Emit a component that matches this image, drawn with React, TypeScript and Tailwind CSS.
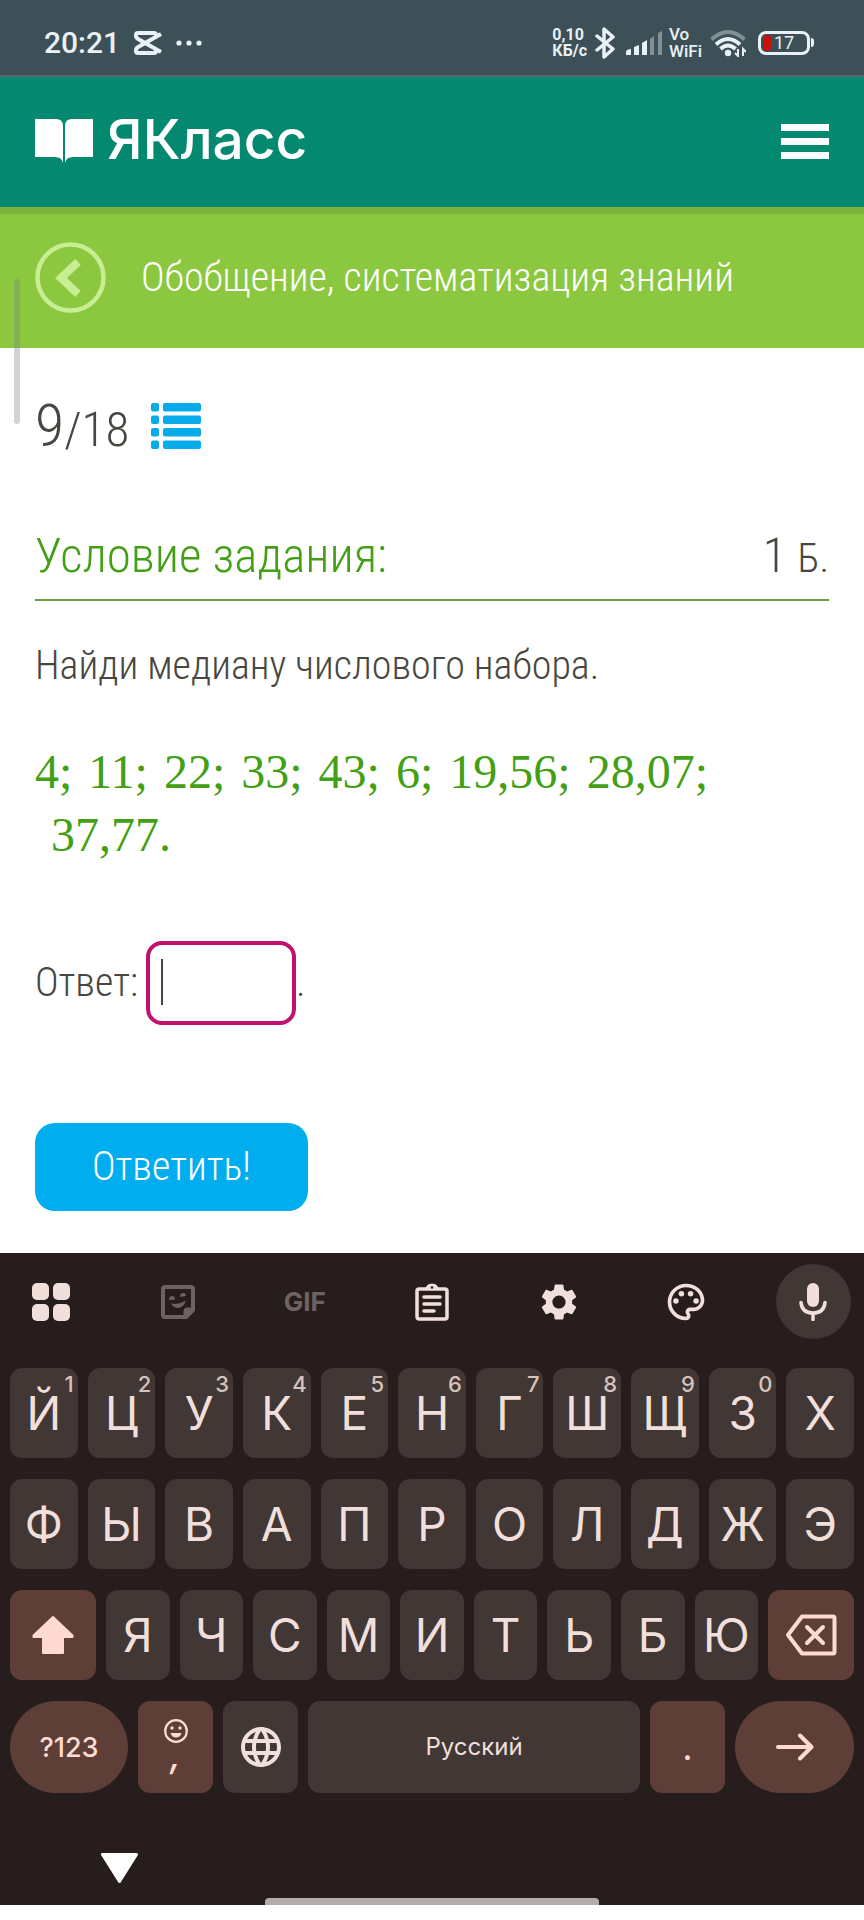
import { ReactElement, ReactNode } from 'react';
import { MdLanguage, MdOutlinePalette, MdSettings } from 'react-icons/md';

interface LetterKey {
  label: string;
  hint?: string;
}

const topRow: LetterKey[] = [
  { label: 'Й', hint: '1' },
  { label: 'Ц', hint: '2' },
  { label: 'У', hint: '3' },
  { label: 'К', hint: '4' },
  { label: 'Е', hint: '5' },
  { label: 'Н', hint: '6' },
  { label: 'Г', hint: '7' },
  { label: 'Ш', hint: '8' },
  { label: 'Щ', hint: '9' },
  { label: 'З', hint: '0' },
  { label: 'Х' },
];

const middleRow = ['Ф', 'Ы', 'В', 'А', 'П', 'Р', 'О', 'Л', 'Д', 'Ж', 'Э'];
const bottomRow = ['Я', 'Ч', 'С', 'М', 'И', 'Т', 'Ь', 'Б', 'Ю'];

const numbers = ['4;', '11;', '22;', '33;', '43;', '6;', '19,56;', '28,07;', '37,77.'];

function StatusBar() {
  return (
    <div className="flex h-[77px] items-center justify-between border-b-2 border-[#536872] bg-[#3d5057] pt-[10px] pr-[50px] pl-[44px] font-[Roboto,sans-serif] font-medium text-[#e8f1f5]">
      <div className="flex items-center">
        <span className="text-[30px] leading-9">20:21</span>
        <svg className="ml-[14px] h-6 w-7" viewBox="0 0 28 24" fill="none" stroke="currentColor" strokeWidth="4">
          <path d="M27 3 5 15.500Q2 17 2 19v1q0 2 2 2h16q2 0 2-2v-1" />
          <path d="M27 21 5 8.500Q2 7 2 5V4q0-2 2-2h16q2 0 2 2v1" />
        </svg>
        <svg className="ml-[14px] h-6 w-7" viewBox="0 0 28 24" fill="currentColor">
          <circle cx="3" cy="12" r="2.600" />
          <circle cx="13" cy="12" r="2.600" />
          <circle cx="23" cy="12" r="2.600" />
        </svg>
      </div>

      <div className="flex items-center">
        <div className="text-[16px] leading-4 font-bold">
          <div>0,10</div>
          <div>КБ/с</div>
        </div>
        <svg className="ml-2 h-8 w-5" viewBox="0 0 20 32" fill="none" stroke="currentColor" strokeWidth="3.500">
          <path d="m2 9 16 13-9 8V2l9 8L2 23" strokeLinecap="round" strokeLinejoin="round" />
        </svg>
        <svg className="ml-[11px] h-6 w-9" viewBox="0 0 36 24" fill="currentColor">
          <path d="M0 24v-3q0-2 2-2.500l3-.5v6zM8 24v-8l5-2v10zM16 24V12l5-3v15z" />
          <path d="M24 24V8l4-3v19zM32 24V2l4-2v24z" opacity=".4" />
        </svg>
        <div className="ml-[7px] text-[17px] leading-[17px]">
          <div>Vo</div>
          <div>WiFi</div>
        </div>
        <svg className="ml-2 h-7 w-9" viewBox="0 0 36 28" fill="none" stroke="currentColor" strokeWidth="4">
          <path d="M1.500 10.500Q18-4.500 34.500 10.500" opacity=".4" />
          <path d="M6 15.500Q18 4.500 30 15.500" />
          <path d="M10.500 20Q18 13 25.500 20" />
          <circle cx="18" cy="24" r="3.200" fill="currentColor" stroke="none" />
          <path d="M28 20v7l-3-3M33 27v-7l3 3" strokeWidth="2" />
        </svg>
        <div className="ml-3 flex h-6 w-[52px] items-center rounded-lg border-[3px] border-current px-[2px]">
          <span className="h-4 w-2 rounded-sm bg-[#c8100c]" />
          <span className="pl-[3px] text-[18px] leading-5 font-normal">17</span>
        </div>
        <span className="ml-px h-[9px] w-[3px] rounded-r bg-current" />
      </div>
    </div>
  );
}

function SiteHeader() {
  return (
    <header className="flex h-[130px] items-center justify-between bg-[#058870] px-[35px] pb-[2px] text-white">
      <a href="#home" className="flex items-center gap-[14px] pb-1">
        <svg className="mt-1 h-11 w-[58px]" viewBox="0 0 58 44" fill="currentColor">
          <path d="M0 0h21q7 0 7 7v37q-1-6-8-6H0z" />
          <path d="M58 0H37q-7 0-7 7v37q1-6 8-6h20z" />
        </svg>
        <span className="font-[Inter,sans-serif] text-[55px] leading-[60px] font-medium">ЯКласс</span>
      </a>
      <button type="button" aria-label="Меню" className="flex w-12 flex-col gap-[7px]">
        <span className="h-[7px] bg-white" />
        <span className="h-[7px] bg-white" />
        <span className="h-[7px] bg-white" />
      </button>
    </header>
  );
}

function TopicBar() {
  return (
    <div className="relative flex h-[141px] items-center gap-[35px] bg-[#8bc83f] px-[35px] text-white shadow-[inset_0_7px_0_#7cb33e]">
      <button type="button" aria-label="Назад" className="text-[#c8ee93]">
        <svg className="size-[71px]" viewBox="0 0 71 71" fill="none" stroke="currentColor">
          <circle cx="35.500" cy="35.500" r="33" strokeWidth="4.500" />
          <path d="M43 20 26 36l17 16" strokeWidth="8" />
        </svg>
      </button>
      <h1 className="text-[40px] leading-[48px]">Обобщение, систематизация знаний</h1>
      <span className="absolute top-[72px] left-[14px] h-[145px] w-[6px] rounded-full bg-[#808080]/35" />
    </div>
  );
}

function Task() {
  return (
    <main className="px-[35px] pt-12 pb-[42px] text-[#474740]">
      <div className="flex h-[60px] items-center gap-[22px]">
        <div className="flex items-baseline pt-1 text-[49px] leading-[60px]">
          <span className="text-[60px]">9</span>
          <span>/18</span>
        </div>
        <button type="button" aria-label="Список заданий" className="text-[#08abea]">
          <svg className="h-[46px] w-[50px]" viewBox="0 0 50 46" fill="currentColor">
            {[0, 12.5, 25, 37.5].map((y) => (
              <g key={y}>
                <rect x="0" y={y} width="8" height="8.500" rx="2" />
                <rect x="12" y={y} width="38" height="8.500" rx="2" />
              </g>
            ))}
          </svg>
        </button>
      </div>

      <div className="mt-[70px] flex h-[75px] justify-between border-b-2 border-[#6f9a4c] text-[49px] leading-[60px]">
        <h2 className="text-[#439f15]">Условие задания:</h2>
        <div>
          1 <span className="text-[40px]">Б.</span>
        </div>
      </div>

      <p className="mt-[41px] text-[40px] leading-[48px]">Найди медиану числового набора.</p>

      <p className="mt-[50px] font-['Liberation_Serif',serif] text-[48px] leading-[63px] text-[#439f15]">
        {numbers.map((value, index) => (
          <span key={value} className={index ? 'inline-block pl-4' : 'inline-block'}>
            {value}
          </span>
        ))}
      </p>

      <div className="mt-[75px] flex items-center text-[40px] leading-[48px]">
        <label htmlFor="answer" className="pr-2">
          Ответ:
        </label>
        <div className="relative">
          <input
            id="answer"
            type="text"
            className="block h-[84px] w-[150px] rounded-2xl border-4 border-[#c1106e] px-3 outline-none"
          />
          <span className="absolute top-[18px] left-[15px] h-[46px] w-[2px] bg-[#474740]" />
        </div>
        <span>.</span>
      </div>

      <button type="button" className="mt-[98px] h-[88px] rounded-[20px] bg-[#00adef] px-[57px] text-[40px] text-white">
        Ответить!
      </button>
    </main>
  );
}

type KeyProps = {
  children: ReactNode;
  className?: string;
  label?: string;
};

function Key({ children, className = 'min-w-0 flex-1 rounded-xl bg-[#413735]', label }: KeyProps) {
  return (
    <button type="button" aria-label={label} className={`relative flex items-center justify-center ${className}`}>
      {children}
    </button>
  );
}

const tools: Array<{ name: string; icon: ReactElement }> = [
  {
    name: 'Панель',
    icon: (
      <svg className="size-[38px]" viewBox="0 0 38 38" fill="currentColor">
        <rect width="17" height="17" rx="5" />
        <rect x="21" width="17" height="17" rx="5" />
        <rect y="21" width="17" height="17" rx="5" />
        <rect x="21" y="21" width="17" height="17" rx="5" />
      </svg>
    ),
  },
  {
    name: 'Стикеры',
    icon: (
      <svg className="size-[34px] text-[#6d6361]" viewBox="0 0 34 34" fill="none" stroke="currentColor">
        <path d="M4 2h26q2 0 2 2v21l-7 7H4q-2 0-2-2V4q0-2 2-2z" strokeWidth="4" strokeLinejoin="round" />
        <path d="M23 32v-6q0-3 3-3h6z" fill="currentColor" />
        <path d="M10 18.500Q18 20 25 15.500 22 23 17 23q-4 0-7-4.500z" fill="currentColor" stroke="none" />
        <path d="M8 15q0-4 3-4t3 3.500zM19 12q0-4 3-4t3 3z" fill="currentColor" stroke="none" />
      </svg>
    ),
  },
  { name: 'GIF', icon: <span className="text-[26px] leading-8 font-bold text-[#6d6361]">GIF</span> },
  {
    name: 'Буфер обмена',
    icon: (
      <svg className="h-[38px] w-[34px]" viewBox="0 0 34 38" fill="none" stroke="currentColor" strokeWidth="3.500">
        <rect x="2" y="6" width="30" height="30" rx="2" />
        <path d="M11 5q1-4 6-4t6 4z" fill="currentColor" strokeWidth="1" />
        <path d="M9 14h16M9 21h16M9 28h10" strokeLinecap="round" />
        <circle cx="17" cy="4.500" r="1.300" fill="#271d1c" stroke="none" />
      </svg>
    ),
  },
  { name: 'Настройки', icon: <MdSettings className="size-11" /> },
  { name: 'Темы', icon: <MdOutlinePalette className="size-11" /> },
  {
    name: 'Голосовой ввод',
    icon: (
      <svg className="h-[38px] w-7" viewBox="0 0 28 38" fill="none" stroke="currentColor" strokeWidth="3.500">
        <rect x="8" y="0" width="12" height="24" rx="6" fill="currentColor" stroke="none" />
        <path d="M2 19.500q1 10.500 12 10.500t12-10.500M14 30v6.500" strokeLinecap="round" />
      </svg>
    ),
  },
];

function Keyboard() {
  return (
    <section className="bg-[#271d1c] pt-[11px] font-[Inter,sans-serif] text-[46px] leading-none font-normal text-[#f1dfdb]">
      <div className="flex justify-between px-[13px]">
        {tools.map((tool, index) => (
          <button
            key={tool.name}
            type="button"
            aria-label={tool.name}
            className={`flex size-[75px] items-center justify-center rounded-full ${
              index === tools.length - 1 ? 'bg-[#413735]' : ''
            }`}
          >
            {tool.icon}
          </button>
        ))}
      </div>

      <div className="mt-[29px] flex flex-col gap-[21px] px-[10px]">
        <div className="flex h-[90px] gap-[10px]">
          {topRow.map((key) => (
            <Key key={key.label}>
              {key.label}
              {key.hint && (
                <span className="absolute top-1 right-1 text-[22px] leading-6 font-medium text-[#d8c2bd]">
                  {key.hint}
                </span>
              )}
            </Key>
          ))}
        </div>

        <div className="flex h-[90px] gap-[10px]">
          {middleRow.map((letter) => (
            <Key key={letter}>{letter}</Key>
          ))}
        </div>

        <div className="flex h-[90px] gap-[10px]">
          <Key label="Shift" className="w-[86px] rounded-xl bg-[#5d3f38] text-[#ffdad3]">
            <svg className="h-10 w-[42px]" viewBox="0 0 42 40" fill="currentColor" stroke="currentColor">
              <path d="M21 2 1.500 20.500V22H11v16h20V22h9.500v-1.500z" strokeWidth="2" strokeLinejoin="round" />
            </svg>
          </Key>
          {bottomRow.map((letter) => (
            <Key key={letter}>{letter}</Key>
          ))}
          <Key label="Удалить" className="w-[86px] rounded-xl bg-[#5d3f38] text-[#ffdad3]">
            <svg className="h-[42px] w-[52px]" viewBox="0 0 52 42" fill="none" stroke="currentColor" strokeWidth="4">
              <path d="M17 2.500h31q1.500 0 1.500 1.500v34q0 1.500-1.500 1.500H17L3 21z" strokeLinejoin="round" />
              <path d="m22 13 16 16M38 13 22 29" strokeLinecap="round" />
            </svg>
          </Key>
        </div>

        <div className="flex h-[92px] gap-[10px]">
          <Key className="w-[118px] rounded-full bg-[#5d3f38] text-[27px] font-medium text-[#ffdad3]">?123</Key>
          <Key label="Эмодзи" className="w-[75px] flex-col rounded-xl bg-[#5d3f38] pb-2 text-[36px] text-[#ffdad3]">
            <svg className="size-6" viewBox="0 0 24 24" fill="none" stroke="currentColor" strokeWidth="2.200">
              <circle cx="12" cy="12" r="10.800" />
              <circle cx="8" cy="9" r="1.700" fill="currentColor" stroke="none" />
              <circle cx="16" cy="9" r="1.700" fill="currentColor" stroke="none" />
              <path d="M6.500 14h11q-1.500 4.500-5.500 4.500T6.500 14z" fill="currentColor" stroke="none" />
            </svg>
            <span className="leading-6 font-medium italic">,</span>
          </Key>
          <Key label="Язык" className="w-[75px] rounded-xl bg-[#413735]">
            <MdLanguage className="size-12" />
          </Key>
          <Key className="flex-1 rounded-xl bg-[#413735] text-[24px]">Русский</Key>
          <Key className="w-[75px] rounded-xl bg-[#5d3f38] text-[36px] text-[#ffdad3]">.</Key>
          <Key label="Далее" className="w-[119px] rounded-full bg-[#5d3f38] text-[#ffdad3]">
            <svg className="h-7 w-[38px]" viewBox="0 0 38 28" fill="none" stroke="currentColor" strokeWidth="4">
              <path d="M2 14h33M24 2.500 35.500 14 24 25.500" strokeLinecap="round" strokeLinejoin="round" />
            </svg>
          </Key>
        </div>
      </div>

      <div className="px-[101px] pt-[60px] pb-[15px] text-white">
        <button type="button" aria-label="Скрыть клавиатуру" className="block">
          <svg className="h-[30px] w-[37px]" viewBox="0 0 37 30" fill="currentColor" stroke="currentColor">
            <path d="M1.500 1.500h34l-17 27z" strokeWidth="3" strokeLinejoin="round" />
          </svg>
        </button>
      </div>
      <div className="mx-auto h-[7px] w-[334px] rounded-t bg-[#b3aeaa]" />
    </section>
  );
}

export default function App() {
  return (
    <div className="min-h-screen bg-white font-['Roboto_Condensed',Roboto,sans-serif] font-light">
      <StatusBar />
      <SiteHeader />
      <TopicBar />
      <Task />
      <Keyboard />
    </div>
  );
}
